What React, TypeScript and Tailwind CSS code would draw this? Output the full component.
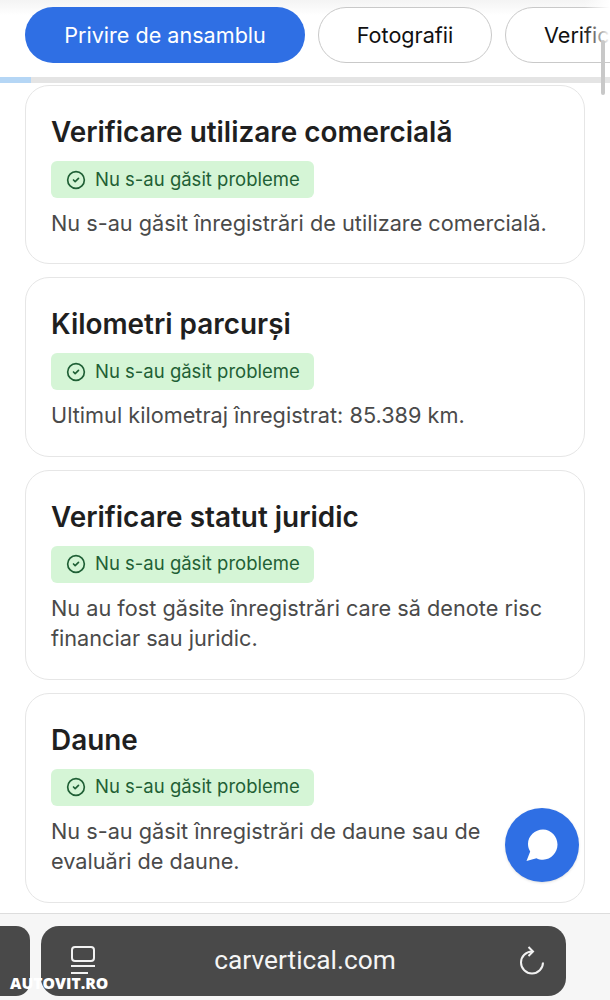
import { CircleCheck } from "lucide-react";

const font = { fontFamily: "Inter, sans-serif" };

const cards = [
  { title: "Verificare utilizare comercială", text: ["Nu s-au găsit înregistrări de utilizare comercială."] },
  { title: "Kilometri parcurși", text: ["Ultimul kilometraj înregistrat: 85.389 km."] },
  {
    title: "Verificare statut juridic",
    text: ["Nu au fost găsite înregistrări care să denote risc", "financiar sau juridic."],
  },
  { title: "Daune", text: ["Nu s-au găsit înregistrări de daune sau de", "evaluări de daune."] },
];

function Card({ title, text }: { title: string; text: string[] }) {
  return (
    <div className="rounded-[24px] border border-[#e6e6e6] bg-white px-[25px] pt-[26px] pb-[24.9px]">
      <h2 className="h-[40px] text-[27.9px] leading-[40px] font-semibold text-[#1f1f1f]">{title}</h2>
      <div className="mt-[9px] flex h-[37px] w-[263px] items-center gap-[9px] rounded-[6px] bg-[#d5f5d6] pl-[15px] text-[18.5px] text-[#1f5f35]">
        <CircleCheck size={20} strokeWidth={2} />
        <span>Nu s-au găsit probleme</span>
      </div>
      <div className="mt-[10px] text-[21.7px] leading-[30.5px] text-[#4a4a4a]">
        {text.map((line) => (
          <p key={line}>{line}</p>
        ))}
      </div>
    </div>
  );
}

export default function App() {
  return (
    <div className="relative flex h-[1000px] w-[610px] flex-col overflow-hidden bg-white" style={font}>
      <div className="flex h-[77px] shrink-0 gap-[13px] overflow-hidden bg-gradient-to-b from-[#f4f4f4] to-white to-[20%] pt-[7px] pl-[25px]">
        <div className="flex h-[56px] w-[280px] shrink-0 items-center justify-center rounded-[28px] bg-[#2f6fe4] text-[21.6px] text-white">
          Privire de ansamblu
        </div>
        <div className="flex h-[56px] w-[174px] shrink-0 items-center justify-center rounded-[28px] border border-[#c9c9c9] bg-white text-[21.6px] text-[#111111]">
          Fotografii
        </div>
        <div className="flex h-[56px] w-[175px] shrink-0 items-center rounded-[28px] border border-[#c9c9c9] bg-white pl-[38px] text-[21.6px] text-[#111111]">
          Verificări
        </div>
      </div>

      <div className="h-[6px] shrink-0 bg-[#e4e4e4]">
        <div className="h-full w-[31px] bg-[#b5d6f5]" />
      </div>

      <div className="mt-[2px] flex flex-1 flex-col gap-[13px] px-[25px]">
        {cards.map((card) => (
          <Card key={card.title} title={card.title} text={card.text} />
        ))}
      </div>

      <div className="flex h-[87px] shrink-0 gap-[11px] border-t border-[#dddddd] bg-[#f6f6f6] pt-[12px]">
        <div className="h-[70px] w-[30px] shrink-0 rounded-r-[14px] bg-[#494949]" />
        <div className="flex h-[70px] w-[525px] shrink-0 items-center justify-between rounded-[18px] bg-[#494949] pr-[21px] pl-[30px] text-white">
          <svg width="24" height="30" viewBox="0 0 24 30" fill="none" stroke="#f2f2f2" strokeWidth="2">
            <rect x="1" y="1" width="22" height="14" rx="3" />
            <path d="M0 20h24M0 27h17" />
          </svg>
          <span className="mr-[4px] text-[26.3px] text-[#f5f5f5]" style={{ fontFamily: "Roboto, sans-serif" }}>
            carvertical.com
          </span>
          <svg width="26" height="30" viewBox="0 0 26 30" fill="none" stroke="#f2f2f2" strokeWidth="2">
            <path d="M24 16.500A11 11 0 1 1 13 5.500" />
            <path d="M9.500 1 14 5.500 9.500 10" />
          </svg>
        </div>
      </div>

      {/* scrollbar, tab fade, chat bubble and watermark sit on top of the page */}
      <div className="absolute top-0 right-0 h-[62px] w-[26px] bg-gradient-to-r from-white/0 to-white" />
      <div className="absolute top-[40px] right-[5px] h-[55px] w-[4px] rounded-full bg-[#c8c8c8]" />
      <div className="absolute top-[808px] left-[505px] flex h-[74px] w-[74px] items-center justify-center rounded-full bg-[#2f6fe4] shadow-sm">
        <svg width="34" height="34" viewBox="0 0 34 34" fill="white">
          <path d="M18 1.500C9.800 1.500 3 8 3 16c0 2.800.8 5.300 2.200 7.400L1.500 33l10-2.800c1.900 1 4.200 1.500 6.500 1.500 8.100 0 14.500-7 14.500-15.100S26.100 1.500 18 1.500z" />
        </svg>
      </div>
      <div
        className="absolute top-[973px] left-[10px] text-[15.7px] leading-[20px] font-extrabold text-white"
        style={{ fontFamily: "'Open Sans', sans-serif" }}
      >
        AUTOVIT.RO
      </div>
    </div>
  );
}
